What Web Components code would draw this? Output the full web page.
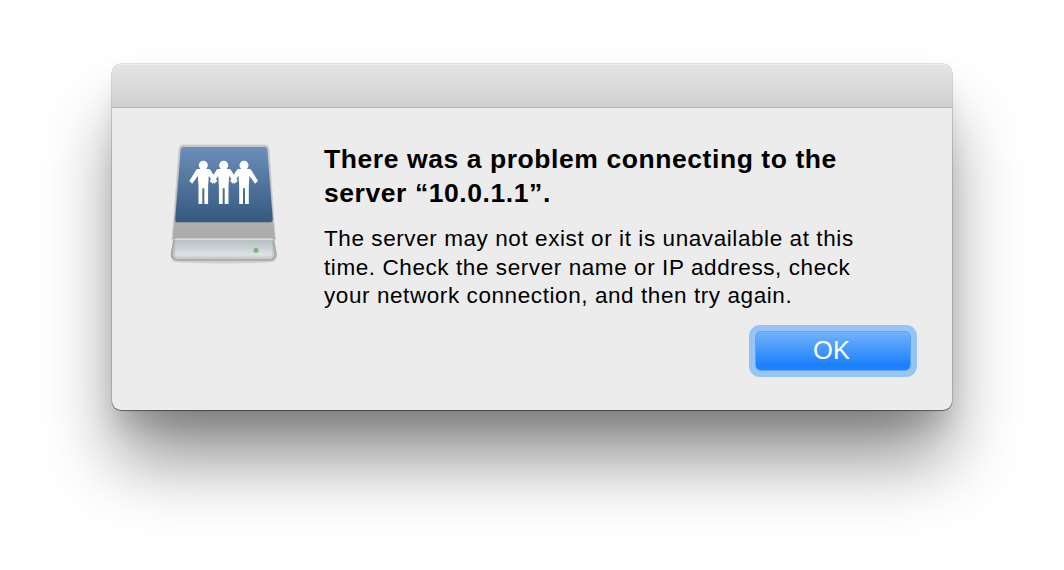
<!DOCTYPE html>
<html>
<head>
<meta charset="utf-8">
<style>
  html, body { margin: 0; height: 100%; background: #fff; }
  body { font-family: "Liberation Sans", Arial, sans-serif; overflow: hidden; }
</style>
</head>
<body>
<alert-window>
  <server-icon slot="icon"></server-icon>
  <span slot="title">There was a problem connecting to the<br>server “10.0.1.1”.</span>
  <span>The server may not exist or it is unavailable at this<br>time. Check the server name or IP address, check<br>your network connection, and then try again.</span>
  <alert-button slot="actions">OK</alert-button>
</alert-window>

<script>
class AlertWindow extends HTMLElement {
  constructor() {
    super();
    this.attachShadow({ mode: 'open' });
  }

  connectedCallback() {
    this.shadowRoot.innerHTML = `
      <style>
        :host {
          display: block;
          box-sizing: border-box;
          padding: 64px 112px 0;
          height: 570px;
          color: #000;
        }

        .window {
          height: 346px;
          box-sizing: border-box;
          border-radius: 9px;
          background: #ececec;
          box-shadow:
            0 0 0 0.5px rgba(0, 0, 0, 0.22),
            0 1px 1px rgba(0, 0, 0, 0.4),
            0 20px 24px -4px rgba(0, 0, 0, 0.12),
            0 54px 72px -6px rgba(0, 0, 0, 0.45);
          display: flex;
          flex-direction: column;
        }

        /* Empty title bar */
        .titlebar {
          height: 42px;
          flex: none;
          border-radius: 9px 9px 0 0;
          border-top: 1px solid #ededed;
          border-bottom: 1px solid #b4b4b4;
          background: linear-gradient(#e4e4e4, #d0d0d0);
        }

        .body {
          flex: 1;
          display: flex;
          padding: 33px 35px 0 58px;
        }

        .icon {
          flex: none;
          width: 154px;
        }

        .content {
          flex: 1;
          display: flex;
          flex-direction: column;
        }

        .title {
          font-size: 26.5px;
          font-weight: 700;
          line-height: 34px;
          letter-spacing: 0.57px;
          margin: 1px 0 0;
        }

        .message {
          font-size: 22.5px;
          line-height: 28.5px;
          letter-spacing: 0.58px;
          margin: 15px 0 0;
        }

        .actions {
          display: flex;
          justify-content: flex-end;
          margin-top: 14px;
        }
      </style>
      <div class="window">
        <div class="titlebar"></div>
        <div class="body">
          <div class="icon"><slot name="icon"></slot></div>
          <div class="content">
            <h1 class="title"><slot name="title"></slot></h1>
            <p class="message"><slot></slot></p>
            <div class="actions"><slot name="actions"></slot></div>
          </div>
        </div>
      </div>
    `;
  }
}

class ServerIcon extends HTMLElement {
  constructor() {
    super();
    this.attachShadow({ mode: 'open' });
  }

  connectedCallback() {
    this.shadowRoot.innerHTML = `
      <style>
        :host { display: block; width: 110px; height: 124px; }
        svg { display: block; overflow: visible; }
      </style>
      <svg width="110" height="124" viewBox="0 0 110 124">
        <defs>
          <linearGradient id="face" x1="0" y1="0" x2="0" y2="1">
            <stop offset="0" stop-color="#6b8fb8"/>
            <stop offset="1" stop-color="#355880"/>
          </linearGradient>
          <linearGradient id="front" x1="0" y1="0" x2="0" y2="1">
            <stop offset="0" stop-color="#eeeeee"/>
            <stop offset="0.1" stop-color="#b8c0c4"/>
            <stop offset="0.75" stop-color="#dde3e5"/>
            <stop offset="0.93" stop-color="#c0c4c4"/>
            <stop offset="1" stop-color="#8a8a8a"/>
          </linearGradient>
          <linearGradient id="edges" x1="0" y1="0" x2="1" y2="0">
            <stop offset="0" stop-color="#000" stop-opacity="0.3"/>
            <stop offset="0.05" stop-color="#000" stop-opacity="0"/>
            <stop offset="0.95" stop-color="#000" stop-opacity="0"/>
            <stop offset="1" stop-color="#000" stop-opacity="0.3"/>
          </linearGradient>
          <linearGradient id="shell" x1="0" y1="0" x2="0" y2="1">
            <stop offset="0" stop-color="#c4c4c4"/>
            <stop offset="1" stop-color="#aaaaaa"/>
          </linearGradient>
          <g id="person" fill="#fff">
            <circle cx="0" cy="0" r="4.5"/>
            <path d="M-5.500 3.800 H5.500 Q6.500 3.800 7.200 4.600 L14 15.600 L11 18.400 L5.500 10.500 L4.800 21 V38.700 H1 V23 H-1 V38.700 H-4.800 V21 L-5.500 10.500 L-11 18.400 L-14 15.600 L-7.200 4.600 Q-6.500 3.800 -5.500 3.800 Z"/>
          </g>
        </defs>
        <ellipse cx="53.700" cy="120" rx="52" ry="2.500" fill="rgba(0,0,0,0.12)"/>
        <path d="M13 4 H95 Q98.500 4 99 8 L104 82 L105.500 99 H2 L3.500 82 L9 8 Q9.500 4 13 4 Z" fill="url(#shell)" stroke="#cfcfcf"/>
        <path d="M14 6 H94.500 Q97 6 97.300 9 L102.700 78 Q103 81.300 100 81.300 H8 Q5 81.300 5.200 78 L10.700 9 Q11 6 14 6 Z" fill="url(#face)"/>
        <path d="M2.800 101 Q3 98 6 97.500 H101.500 Q104.500 98 104.700 101 L106.700 113 Q106.700 119.500 101 119.500 H7 Q0.700 119.500 0.700 113 Z" fill="url(#front)"/>
        <path d="M2.800 101 Q3 98 6 97.500 H101.500 Q104.500 98 104.700 101 L106.700 113 Q106.700 119.500 101 119.500 H7 Q0.700 119.500 0.700 113 Z" fill="url(#edges)"/>
        <circle cx="86" cy="109.300" r="2.200" fill="#5fd05f" stroke="#8ea08e" stroke-width="0.8"/>
        <use href="#person" x="33.300" y="24.300"/>
        <use href="#person" x="53.700" y="24.300"/>
        <use href="#person" x="74" y="24.300"/>
      </svg>
    `;
  }
}

class AlertButton extends HTMLElement {
  constructor() {
    super();
    this.attachShadow({ mode: 'open' });
  }

  connectedCallback() {
    this.shadowRoot.innerHTML = `
      <style>
        :host {
          display: block;
          width: 168px;
          height: 52px;
          box-sizing: border-box;
          padding: 6px;
          border-radius: 11px;
          background: #97c4f4;
        }

        .button {
          height: 100%;
          box-sizing: border-box;
          border-radius: 6px;
          border: 1px solid #5ba3f4;
          background: linear-gradient(#72b3fb, #1e81fd 85%);
          color: #fff;
          font-size: 25.5px;
          display: flex;
          align-items: center;
          justify-content: center;
          padding-right: 3px;
        }
      </style>
      <div class="button"><slot></slot></div>
    `;
  }
}

customElements.define('alert-window', AlertWindow);
customElements.define('server-icon', ServerIcon);
customElements.define('alert-button', AlertButton);
</script>
</body>
</html>
